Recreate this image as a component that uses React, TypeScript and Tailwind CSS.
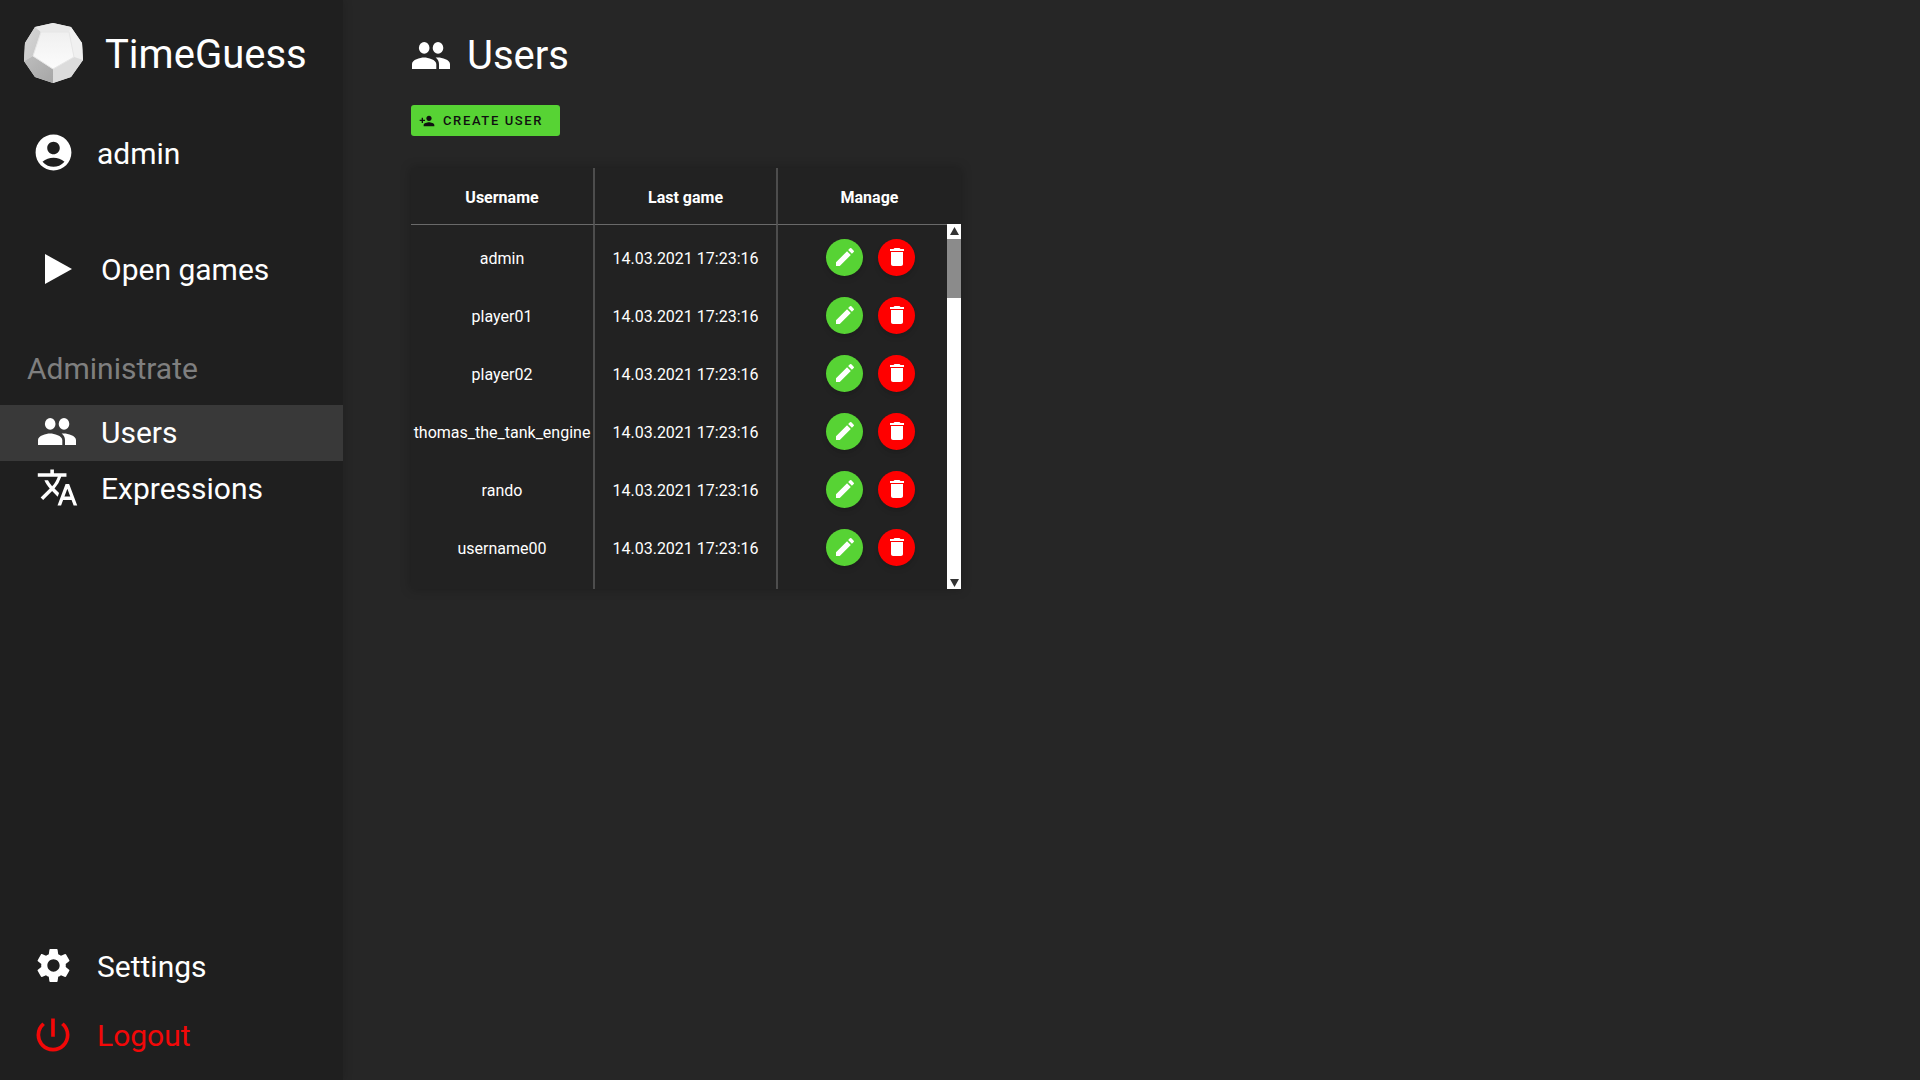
import type { ReactNode } from "react";
import { MdAccountCircle, MdSettings, MdPowerSettingsNew, MdTranslate, MdPersonAdd, MdEdit, MdDelete } from "react-icons/md";

const users = ["admin", "player01", "player02", "thomas_the_tank_engine", "rando", "username00"];

function PeopleIcon() {
  return (
    <svg viewBox="0 0 38 27" className="h-[27px] w-[38px] shrink-0" fill="currentColor" aria-hidden="true">
      <ellipse cx="12.2" cy="5.9" rx="5.3" ry="5.9" />
      <ellipse cx="26" cy="5.9" rx="5.3" ry="5.9" />
      <path d="M12.1 15.4C8.1 15.4 0 17.6 0 22v5h24.3v-5c0-4.4-8.200-6.600-12.200-6.600z" />
      <path d="M26 15.4l-2.400.1c2 1.500 3.400 3.600 3.400 6.500v5H38v-5c0-4.400-8-6.600-12-6.600z" />
    </svg>
  );
}

function Logo() {
  return (
    <svg viewBox="0 0 60 60" className="size-[60px] shrink-0" aria-hidden="true">
      <defs>
        <linearGradient id="left" x1="0" y1="0" x2="1" y2="1">
          <stop offset="0" stopColor="#d6d6d6" />
          <stop offset="1" stopColor="#c6c6c6" />
        </linearGradient>
        <linearGradient id="low" x1="0" y1="0" x2="1" y2="1">
          <stop offset="0" stopColor="#bdbdbd" />
          <stop offset="1" stopColor="#a6a6a6" />
        </linearGradient>
        <linearGradient id="front" x1="0" y1="0" x2="0" y2="1">
          <stop offset="0" stopColor="#f0f0f0" />
          <stop offset="1" stopColor="#fcfcfc" />
        </linearGradient>
      </defs>
      <path d="M30 0L48 4L59 20L60 37L48 54L30 60L12 54L1 38L2 20L12 4z" fill="#e8e8e8" />
      <path d="M12 4L18 9L10 33L1 38L2 20z" fill="url(#left)" />
      <path d="M30 0L48 4L46 9L18 9L12 4z" fill="#e9e9e9" />
      <path d="M48 4L59 20L60 37L51 34L46 9z" fill="#f0f0f0" />
      <path d="M10 33L30 46L30 60L12 54L1 38z" fill="url(#low)" />
      <path d="M30 46L51 34L60 37L48 54L30 60z" fill="#dcdcdc" />
      <path d="M18 9L46 9L51 34L30 46L10 33z" fill="url(#front)" stroke="#e6e6e6" strokeWidth="1" strokeLinejoin="round" />
    </svg>
  );
}

function NavLink({ icon, label, className = "" }: { icon: ReactNode; label: string; className?: string }) {
  return (
    <a href="#" className={`flex h-14 items-center ${className}`}>
      <span className="flex w-11 shrink-0 justify-center pb-[3px]">{icon}</span>
      {label}
    </a>
  );
}

export default function App() {
  return (
    <div className="flex min-h-screen bg-[#262626] font-['Roboto',sans-serif] text-white">
      <nav className="flex w-[343px] shrink-0 flex-col bg-[#1f1f1f] text-[30px] leading-9 shadow-[2px_0_8px_rgba(0,0,0,0.12)]">
        <div className="flex h-[106px] items-center gap-[22px] pl-[23px] text-[40px]">
          <Logo />
          <span className="pt-1">TimeGuess</span>
        </div>
        <NavLink className="mt-5 gap-[22px] pl-[31px]" icon={<MdAccountCircle size={43} />} label="admin" />
        <NavLink
          className="mt-[60px] gap-[22px] pl-[35px]"
          icon={
            <svg viewBox="0 0 27 30" className="ml-0.5 h-[30px] w-[27px]" fill="currentColor" aria-hidden="true">
              <path d="M0 0L27 15L0 30z" />
            </svg>
          }
          label="Open games"
        />
        <h2 className="mt-[53px] pl-[27px] text-[#7f7f7f]">Administrate</h2>
        <NavLink className="mt-[18px] gap-[22px] bg-[#393939] pl-[35px]" icon={<PeopleIcon />} label="Users" />
        <NavLink className="gap-[22px] pl-[35px]" icon={<MdTranslate size={43} />} label="Expressions" />
        <div className="mt-auto flex flex-col gap-[13px] pb-4">
          <NavLink className="gap-[22px] pl-[31px]" icon={<MdSettings size={41} />} label="Settings" />
          <NavLink className="gap-[22px] pl-[31px] text-[#f20808]" icon={<MdPowerSettingsNew size={44} />} label="Logout" />
        </div>
      </nav>
      <main className="flex flex-1 flex-col items-start pl-[68px]">
        <h1 className="mt-[30px] flex items-center gap-[17px] pl-px text-[40px] leading-[48px]">
          <PeopleIcon />
          <span className="pt-0.5">Users</span>
        </h1>
        <button className="mt-[25px] flex h-[31px] w-[149px] items-center gap-2 rounded-[3px] bg-[#57d334] pl-2 text-[13px] font-medium tracking-[0.125em] text-[#101010]">
          <MdPersonAdd size={16} />
          <span className="pt-px">CREATE USER</span>
        </button>
        <div className="relative mt-8 w-[550px] overflow-hidden bg-[#222] shadow-[0_0_10px_rgba(0,0,0,0.25)]">
          <table className="w-full table-fixed border-separate border-spacing-0 text-center text-[16px] leading-6">
            <colgroup>
              <col className="w-[184px]" />
              <col className="w-[183px]" />
              <col className="w-[183px]" />
            </colgroup>
            <thead>
              <tr className="h-[57px]">
                <th className="border-r-2 border-b border-r-[#4d4d4d] border-b-[#6a6a6a] pt-1 font-bold">Username</th>
                <th className="border-r-2 border-b border-r-[#4d4d4d] border-b-[#6a6a6a] pt-1 font-bold">Last game</th>
                <th className="border-b border-b-[#6a6a6a] pt-1 font-bold">Manage</th>
              </tr>
            </thead>
            <tbody>
              <tr className="h-1">
                <td className="border-r-2 border-[#4d4d4d] p-0" />
                <td className="border-r-2 border-[#4d4d4d] p-0" />
                <td className="p-0" />
              </tr>
              {users.map((user) => (
                <tr key={user} className="h-[58px]">
                  <td className="border-r-2 border-[#4d4d4d] p-0 pt-0.5">{user}</td>
                  <td className="border-r-2 border-[#4d4d4d] p-0 pt-0.5">14.03.2021 17:23:16</td>
                  <td className="p-0 pb-0.5 pl-0.5">
                    <div className="flex justify-center gap-[15px]">
                      <button aria-label={`Edit ${user}`} className="flex size-[37px] items-center justify-center rounded-full bg-[#57d334] shadow-md">
                        <MdEdit size={24} />
                      </button>
                      <button aria-label={`Delete ${user}`} className="flex size-[37px] items-center justify-center rounded-full bg-[#ff0000] shadow-md">
                        <MdDelete size={24} />
                      </button>
                    </div>
                  </td>
                </tr>
              ))}
              <tr className="h-3">
                <td className="border-r-2 border-[#4d4d4d] p-0" />
                <td className="border-r-2 border-[#4d4d4d] p-0" />
                <td className="p-0" />
              </tr>
            </tbody>
          </table>
          <div className="absolute right-0 bottom-0 top-14 flex w-[14px] flex-col items-center bg-white" aria-hidden="true">
            <svg viewBox="0 0 14 15" className="h-[15px] w-[14px]" fill="#333">
              <path d="M3 11L7.5 3L12 11z" />
            </svg>
            <div className="h-[59px] w-full bg-[#8b8b8b]" />
            <svg viewBox="0 0 14 15" className="mt-auto h-[15px] w-[14px]" fill="#333">
              <path d="M3 5L7.5 13L12 5z" />
            </svg>
          </div>
        </div>
      </main>
    </div>
  );
}
